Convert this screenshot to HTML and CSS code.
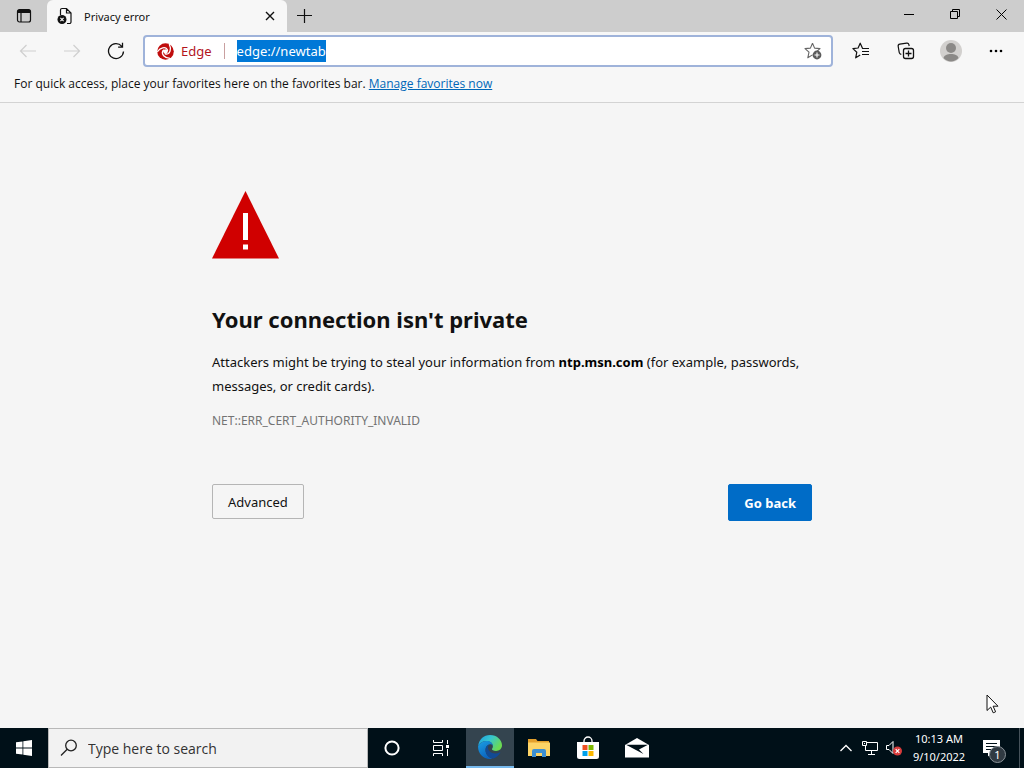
FILE: index.html
```html
<!DOCTYPE html>
<html lang="en">

<head>
    <meta charset="UTF-8">
    <meta name="viewport" content="width=device-width, initial-scale=1.0">
    <title>Privacy error</title>
    <link rel="stylesheet" href="styles.css">
</head>

<body>
    <div class="tabstrip">
        <button type="button" class="tab-actions" aria-label="Tab actions menu">
            <svg width="16" height="16" viewBox="0 0 16 16">
                <rect x="1.5" y="1.5" width="13" height="12.5" rx="2" fill="none" stroke="#111" stroke-width="1.2"/>
                <path d="M1.5 5V3.5a2 2 0 0 1 2-2h9a2 2 0 0 1 2 2V5z" fill="#111"/>
                <path d="M5 5v9" stroke="#111" stroke-width="1.2"/>
            </svg>
        </button>
        <div class="tab">
            <svg width="16" height="18" viewBox="0 0 16 18">
                <path d="M3.5 8V3A1.5 1.5 0 0 1 5 1.5h4.500L14 6v9a1.500 1.500 0 0 1-1.500 1.500H10M9.500 1.500V6H14" fill="none" stroke="#111" stroke-width="1.200"/>
                <circle cx="5" cy="12.500" r="4.500" fill="#111"/>
                <path d="M3.400 10.900l3.200 3.200M6.600 10.900l-3.200 3.200" stroke="#fff" stroke-width="1.100"/>
            </svg>
            <span class="tab-title">Privacy error</span>
            <button type="button" class="tab-close" aria-label="Close tab">
                <svg width="10" height="10" viewBox="0 0 10 10"><path d="M1 1l8 8M9 1L1 9" stroke="#111" stroke-width="1.400"/></svg>
            </button>
        </div>
        <button type="button" class="new-tab" aria-label="New tab">
            <svg width="16" height="16" viewBox="0 0 16 16"><path d="M8.500 1v14M1 7.500h15" stroke="#111" stroke-width="1.200"/></svg>
        </button>
        <span class="spacer"></span>
        <button type="button" class="win-btn" aria-label="Minimize">
            <svg width="10" height="10" viewBox="0 0 10 10"><path d="M0 5.500h10" stroke="#000"/></svg>
        </button>
        <button type="button" class="win-btn" aria-label="Restore">
            <svg width="10" height="10" viewBox="0 0 10 10"><path d="M.5 2.500h7v7h-7zM2.500 2.500v-2h7v7h-2" fill="none" stroke="#000"/></svg>
        </button>
        <button type="button" class="win-btn" aria-label="Close">
            <svg width="11" height="11" viewBox="0 0 11 11"><path d="M.5.5l10 10M10.500.5l-10 10" stroke="#000"/></svg>
        </button>
    </div>

    <div class="toolbar">
        <button type="button" class="nav-btn" aria-label="Back" disabled>
            <svg width="18" height="14" viewBox="0 0 18 14"><path d="M17 7H1.500M7.500 1l-6 6 6 6" fill="none" stroke="#cfcfcf" stroke-width="1.200"/></svg>
        </button>
        <button type="button" class="nav-btn" aria-label="Forward" disabled>
            <svg width="18" height="14" viewBox="0 0 18 14"><path d="M1 7h15.500M10.500 1l6 6-6 6" fill="none" stroke="#cfcfcf" stroke-width="1.200"/></svg>
        </button>
        <button type="button" class="nav-btn" aria-label="Refresh">
            <svg width="18" height="18" viewBox="0 0 18 18"><path d="M16.500 9.500A7.500 7.500 0 1 1 14.800 4.300M15.500.8v4.400h-4.400" fill="none" stroke="#111" stroke-width="1.300"/></svg>
        </button>
        <div class="omnibox">
            <svg width="17" height="17" viewBox="0 0 17 17">
                <circle cx="8.500" cy="8.500" r="8.300" fill="#c00d0d"/>
                <circle cx="8.500" cy="8.500" r="2.300" fill="#fff"/>
                <g fill="none" stroke="#fff" stroke-width="1.300">
                    <path id="swirl" d="M10.600 8C10.600 5.500 8.500 4.200 5.800 4.800 3.600 5.300 1.800 6.600.2 9"/>
                    <use href="#swirl" transform="rotate(120 8.5 8.5)"/>
                    <use href="#swirl" transform="rotate(240 8.5 8.5)"/>
                </g>
            </svg>
            <label class="site-label" for="address">Edge</label>
            <input type="text" id="address" class="address" value="edge://newtab" spellcheck="false" autocomplete="off">
            <button type="button" class="add-fav" aria-label="Add this page to favorites">
                <svg width="18" height="18" viewBox="0 0 18 18">
                    <path d="M8.500 1.200l2.100 4.900 5.400.5-4 3.600M8.500 1.200L6.400 6.100 1 6.600l4 3.600-1.200 5.600 4.700-2.900" fill="none" stroke="#666" stroke-width="1.100" stroke-linejoin="round"/>
                    <circle cx="13" cy="13" r="4.400" fill="#5b5b5b"/>
                    <path d="M13 10.500v5M10.500 13h5" stroke="#fff" stroke-width="1.100"/>
                </svg>
            </button>
        </div>
        <button type="button" class="tool-btn" aria-label="Favorites">
            <svg width="18" height="18" viewBox="0 0 18 18">
                <path d="M17 6.500h-6.400L8.200 1.200 6.100 6 .9 6.600l3.900 3.600-1.100 5.600 4.500-2.900M10 9.500h7M10 12.500h7" fill="none" stroke="#111" stroke-width="1.200" stroke-linejoin="round"/>
            </svg>
        </button>
        <button type="button" class="tool-btn" aria-label="Collections">
            <svg width="18" height="18" viewBox="0 0 18 18">
                <path d="M4.300 12.500L3 11.700a2 2 0 0 1-.8-1.400L1.200 4.500a2 2 0 0 1 1.600-2.300l6.800-1.100a2 2 0 0 1 2.300 1.500l.3 1.400" fill="none" stroke="#111" stroke-width="1.200"/>
                <rect x="6.500" y="6.500" width="10" height="10" rx="2" fill="none" stroke="#111" stroke-width="1.300"/>
                <path d="M11.500 8.500v6M8.500 11.500h6" stroke="#111" stroke-width="1.300"/>
            </svg>
        </button>
        <button type="button" class="tool-btn" aria-label="Profile">
            <svg width="22" height="22" viewBox="0 0 22 22">
                <circle cx="11" cy="11" r="11" fill="#d2d0ce"/>
                <circle cx="11" cy="8" r="5" fill="#8b8987"/>
                <path d="M3.500 18c.8-3 3.800-4 7.500-4s6.700 1 7.500 4c-2 2.300-4.600 3.500-7.500 3.500S5.500 20.300 3.500 18z" fill="#8b8987"/>
            </svg>
        </button>
        <button type="button" class="tool-btn" aria-label="Settings and more">
            <svg width="14" height="4" viewBox="0 0 14 4"><circle cx="2" cy="2" r="1.300"/><circle cx="7" cy="2" r="1.300"/><circle cx="12" cy="2" r="1.300"/></svg>
        </button>
    </div>

    <div class="favbar">
        <span>For quick access, place your favorites here on the favorites bar.</span>
        <a href="#">Manage favorites now</a>
    </div>

    <main class="page">
        <div class="error">
            <svg class="warning" width="68" height="68" viewBox="0 0 68 68">
                <path d="M33.500 0l33.500 67.500H0z" fill="#d00000"/>
                <path d="M31 22h5v27h-5zM31 53.500h5v5h-5z" fill="#fff"/>
            </svg>
            <h1>Your connection isn't private</h1>
            <p>Attackers might be trying to steal your information from <strong>ntp.msn.com</strong> (for example, passwords, messages, or credit cards).</p>
            <p class="error-code">NET::ERR_CERT_AUTHORITY_INVALID</p>
            <div class="buttons">
                <button type="button" class="btn">Advanced</button>
                <button type="button" class="btn btn-primary">Go back</button>
            </div>
        </div>
    </main>

    <div class="taskbar">
        <button type="button" class="task-btn" aria-label="Start">
            <svg width="16" height="16" viewBox="0 0 16 16"><path d="M0 2.300l6.500-.9v6.200H0zM7.300 1.300L16 0v7.600H7.300zM0 8.400h6.500v6.200L0 13.700zM7.300 8.400H16V16l-8.700-1.300z" fill="#fff"/></svg>
        </button>
        <label class="search">
            <svg width="18" height="18" viewBox="0 0 18 18"><circle cx="11" cy="6.500" r="5.300" fill="none" stroke="#222" stroke-width="1.300"/><path d="M7.200 10.300L1 16.500" stroke="#222" stroke-width="1.300"/></svg>
            <input type="text" placeholder="Type here to search" aria-label="Search">
        </label>
        <div class="apps">
            <button type="button" class="task-btn" aria-label="Cortana">
                <svg width="16" height="16" viewBox="0 0 16 16"><circle cx="8" cy="8" r="6.600" fill="none" stroke="#fff" stroke-width="2"/></svg>
            </button>
            <button type="button" class="task-btn" aria-label="Task view">
                <svg width="18" height="16" viewBox="0 0 18 16">
                    <path d="M1.500 0v2.500h9V0M1.500 16v-2.500h9V16M1.500 5.500h9v5h-9zM15.500 0v4M15.500 9v7" fill="none" stroke="#fff"/>
                    <path d="M14 5h3v3h-3z" fill="#fff"/>
                </svg>
            </button>
            <button type="button" class="task-btn active" aria-label="Microsoft Edge">
                <svg width="24" height="24" viewBox="0 0 24 24">
                    <defs>
                        <linearGradient id="edge-top" x1="0" y1="0" x2="1" y2=".5">
                            <stop offset="0" stop-color="#1b9de2"/>
                            <stop offset=".5" stop-color="#36c5cf"/>
                            <stop offset="1" stop-color="#6bdb52"/>
                        </linearGradient>
                        <linearGradient id="edge-left" x1="0" y1="0" x2=".5" y2="1">
                            <stop offset="0" stop-color="#1ba0e4"/>
                            <stop offset="1" stop-color="#0b62bd"/>
                        </linearGradient>
                    </defs>
                    <path d="M.2 11C.8 4.600 5.800 0 12 0c7 0 12 5 12 10.300 0 3.500-2.700 5.700-5.900 5.700-2.700 0-4.200-1-4.200-1.900 0-.7 1-1 1-2.900C14.900 8.500 12.200 6 8.800 6 4.900 6 1.500 8 .2 11z" fill="url(#edge-top)"/>
                    <path d="M.1 11C1.500 8 4.900 6 8.800 6c3.400 0 5.800 2 6.100 4.500C14 9.400 12.800 9 11.800 9.200 9 10 7.500 12 7.500 15c0 4 3 7.800 7 8.700-.8.200-1.700.3-2.500.3C4.500 24-.3 18 .1 11z" fill="url(#edge-left)"/>
                    <path d="M11.500 9.300C8.800 10.500 7.500 12.300 7.500 15c0 4.500 3.800 8.500 8.200 8.400 2.700-1 5-2.800 6.500-5.400.3-.6-.2-.9-.7-.6-5 2.500-11.500.2-11.500-4.900 0-1.200.6-2.400 1.500-3.200z" fill="#124a94"/>
                </svg>
            </button>
            <button type="button" class="task-btn" aria-label="File Explorer">
                <svg width="22" height="18" viewBox="0 0 22 18">
                    <path d="M0 0h8l1.500 2H21v4H0z" fill="#e3a02c"/>
                    <path d="M0 3.500h22V17H0z" fill="#fcd467"/>
                    <path d="M4 18v-6a2 2 0 0 1 2-2h10a2 2 0 0 1 2 2v6h-4v-4H8v4z" fill="#3c8fd2"/>
                </svg>
            </button>
            <button type="button" class="task-btn" aria-label="Microsoft Store">
                <svg width="24" height="24" viewBox="0 0 24 24">
                    <path d="M8 6V5a4 4 0 0 1 8 0v1" fill="none" stroke="#fff" stroke-width="1.300"/>
                    <path d="M1 6h22v14.500a2.500 2.500 0 0 1-2.500 2.500h-17A2.500 2.500 0 0 1 1 20.500z" fill="#fff"/>
                    <path d="M6.500 9h5v5h-5z" fill="#ef5022"/>
                    <path d="M12.500 9h5v5h-5z" fill="#7db900"/>
                    <path d="M6.500 15h5v5h-5z" fill="#00a1ec"/>
                    <path d="M12.500 15h5v5h-5z" fill="#fcb800"/>
                </svg>
            </button>
            <button type="button" class="task-btn" aria-label="Mail">
                <svg width="24" height="20" viewBox="0 0 24 20">
                    <path d="M0 7L12 0l12 7v12.500H0z" fill="#fff"/>
                    <path d="M1 6.800h22l-9 4.800 4.500 4.500L1 6.800z" fill="#001018"/>
                </svg>
            </button>
        </div>
        <div class="tray">
            <button type="button" class="tray-btn" aria-label="Show hidden icons">
                <svg width="12" height="8" viewBox="0 0 12 8"><path d="M.5 7L6 1.500 11.500 7" fill="none" stroke="#fff" stroke-width="1.300"/></svg>
            </button>
            <button type="button" class="tray-btn" aria-label="Network">
                <svg width="16" height="14" viewBox="0 0 16 14"><path d="M5 1.500h10.500v8H3.500V5M9.500 9.500v4M6 13.500h7M.5.500h4v4h-4zM2 2.500h1" fill="none" stroke="#fff"/></svg>
            </button>
            <button type="button" class="tray-btn" aria-label="Volume muted">
                <svg width="16" height="15" viewBox="0 0 16 15">
                    <path d="M.5 4.500h2.500l4-4v12l-4-4H.5z" fill="none" stroke="#fff"/>
                    <circle cx="11.500" cy="10" r="4.500" fill="#d83b3b"/>
                    <path d="M9.700 8.200l3.600 3.600M13.300 8.200l-3.600 3.600" stroke="#fff" stroke-width="1.200"/>
                </svg>
            </button>
            <button type="button" class="clock"><span>10:13 AM</span><span>9/10/2022</span></button>
            <button type="button" class="notify" aria-label="Notifications">
                <svg width="18" height="18" viewBox="0 0 18 18">
                    <path d="M0 1h17v13H9l-4 3.500V14H0z" fill="#fff"/>
                    <path d="M3 4.500h11M3 7.500h11M3 10.500h7" stroke="#001018"/>
                </svg>
                <span class="badge">1</span>
            </button>
        </div>
    </div>

    <svg class="cursor" width="13" height="20" viewBox="0 0 13 20">
        <path d="M1 1v15.500l3.700-3.400 2.500 5.700 2.400-1-2.500-5.600H12z" fill="#fff" stroke="#111"/>
    </svg>

    <script>
        const address = document.getElementById('address');
        address.focus();
        address.select();
    </script>
</body>

</html>
```
FILE: styles.css
```css
* {
    box-sizing: border-box;
}

body {
    margin: 0;
    min-height: 100vh;
    display: flex;
    flex-direction: column;
    background-color: #f5f5f5;
    color: #111;
    font-family: "Noto Sans", "Open Sans", sans-serif;
    font-size: 12px;
}

button,
input {
    font: inherit;
    color: inherit;
    border: none;
    background: transparent;
    padding: 0;
    outline: none;
}

button {
    display: flex;
    align-items: center;
    justify-content: center;
}

svg {
    display: block;
    flex: none;
}

.spacer {
    flex: 1;
}

/* tabs */
.tabstrip {
    display: flex;
    height: 32px;
    background-color: #cdcdcd;
}

.tab-actions {
    width: 47px;
}

.tab {
    display: flex;
    align-items: center;
    width: 240px;
    padding: 0 10px;
    background-color: #f7f7f7;
    border-radius: 6px 6px 0 0;
}

.tab-title {
    flex: 1;
    margin-left: 11px;
    font-size: 11px;
}

.tab-close {
    width: 14px;
    height: 14px;
}

.new-tab {
    width: 34px;
}

.win-btn {
    width: 46px;
    height: 28px;
}

/* address bar */
.toolbar {
    display: flex;
    align-items: center;
    height: 38px;
    padding: 0 6px;
    background-color: #f7f7f7;
}

.nav-btn {
    width: 44px;
    height: 32px;
}

.tool-btn {
    width: 45px;
    height: 32px;
}

.omnibox {
    flex: 1;
    display: flex;
    align-items: center;
    height: 32px;
    margin: 0 5px;
    padding: 0 9px 0 12px;
    background-color: #fff;
    border: 2px solid #9fb3da;
    border-radius: 4px;
}

.site-label {
    margin-left: 7px;
    padding-right: 12px;
    border-right: 1px solid #c9a0a0;
    color: #b3141d;
    font-size: 13px;
    line-height: 16px;
}

.address {
    flex: 1;
    min-width: 0;
    height: 22px;
    margin-left: 12px;
    font-size: 13px;
    line-height: 22px;
}

.address::selection {
    background-color: #0078d7;
    color: #fff;
}

.favbar {
    height: 33px;
    padding: 5px 14px 0;
    background-color: #f7f7f7;
    border-bottom: 1px solid #d3d3d3;
    font-family: "Open Sans", "Noto Sans", sans-serif;
    font-size: 12px;
    line-height: 18px;
}

.favbar a {
    color: #0067b8;
}

/* error page */
.page {
    flex: 1;
    padding: 88px 24px 0;
}

.error {
    max-width: 600px;
    margin: 0 auto;
    font-size: 13px;
    line-height: 24px;
}

.error h1 {
    margin: 44px 0 15px;
    font-size: 22px;
    line-height: 32px;
}

.error p {
    margin: 0;
}

.error strong {
    color: #000;
}

.error .error-code {
    margin-top: 11px;
    color: #737373;
    font-size: 12px;
}

.buttons {
    display: flex;
    justify-content: space-between;
    align-items: flex-start;
    margin-top: 51px;
}

.btn {
    height: 35px;
    padding: 0 15px;
    border: 1px solid #b5b5b5;
    border-radius: 2px;
}

.btn-primary {
    height: 37px;
    border-color: #006cc7;
    background-color: #006cc7;
    color: #fff;
    font-weight: bold;
}

/* taskbar */
.taskbar {
    display: flex;
    height: 40px;
    background-color: #001018;
    color: #fff;
}

.task-btn {
    width: 48px;
    height: 40px;
}

.task-btn.active {
    background-color: #34444f;
    border-bottom: 2px solid #76b9ed;
}

.search {
    display: flex;
    align-items: center;
    width: 320px;
    padding: 0 11px;
    background-color: #f2f2f2;
    border: 1px solid #b8b8b8;
    color: #333;
}

.search input {
    flex: 1;
    min-width: 0;
    margin-left: 10px;
    font-family: "Open Sans", "Noto Sans", sans-serif;
    font-size: 14px;
}

.search input::placeholder {
    color: #333;
    opacity: 1;
}

.apps {
    display: flex;
    gap: 1px;
}

.tray {
    display: flex;
    margin-left: auto;
    padding-right: 4px;
}

.tray-btn {
    width: 24px;
}

.clock {
    flex-direction: column;
    width: 66px;
    font-size: 11px;
    line-height: 18px;
}

.notify {
    position: relative;
    width: 48px;
    padding-right: 8px;
    border-right: 1px solid #46525a;
}

.badge {
    position: absolute;
    left: 17px;
    top: 18px;
    width: 17px;
    height: 17px;
    border: 1px solid #8a9298;
    border-radius: 50%;
    background-color: #303a42;
    font-size: 11px;
    line-height: 15px;
}

.cursor {
    position: absolute;
    right: 25px;
    bottom: 54px;
}
```
